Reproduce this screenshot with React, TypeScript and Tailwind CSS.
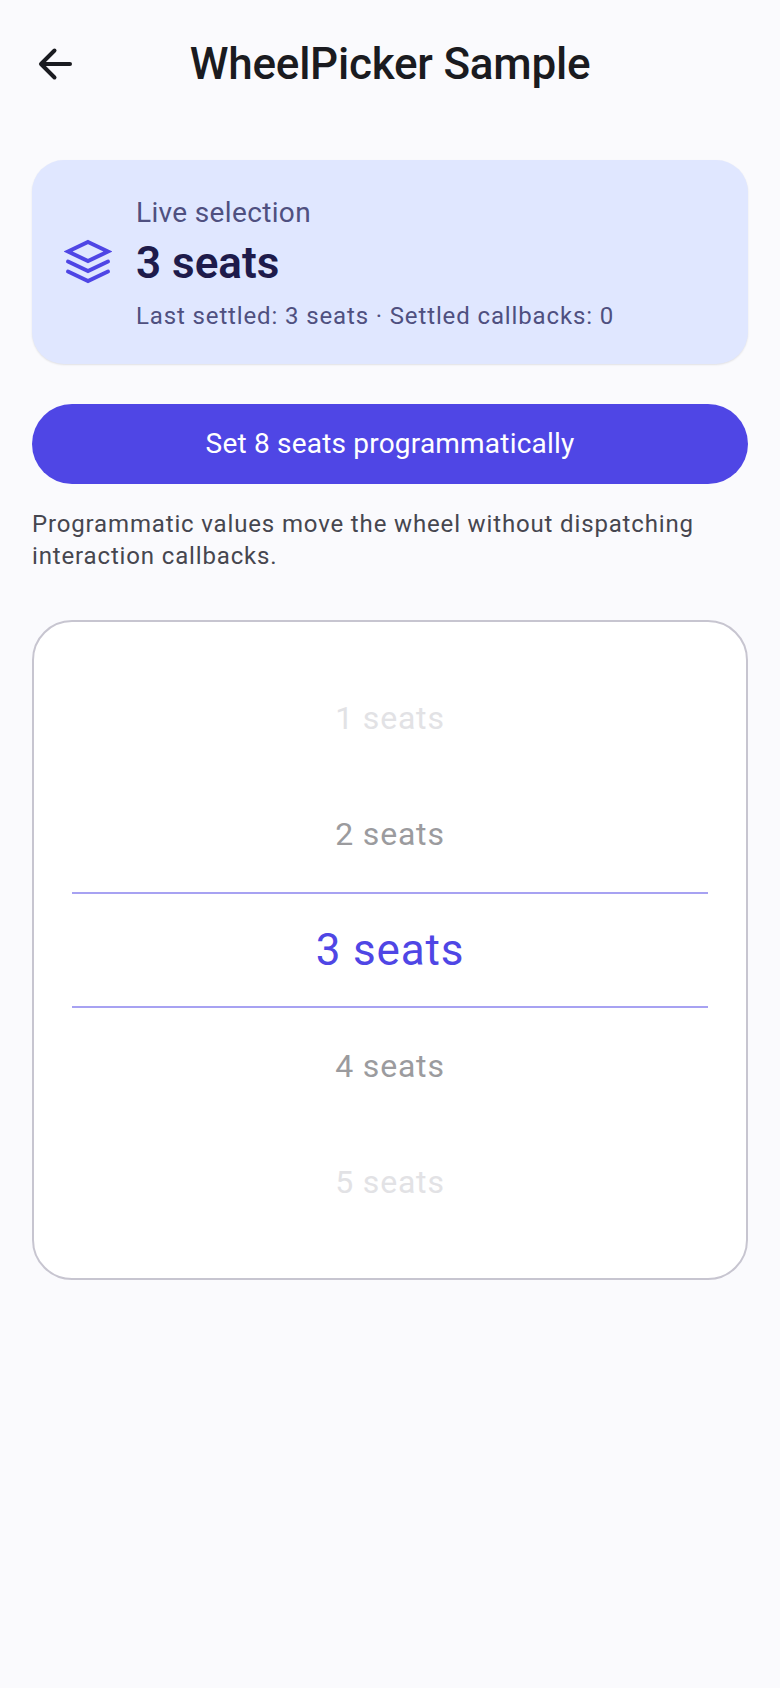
import React from 'react';

const seats = [
  { label: '1 seats', color: 'text-[#e2e2e5]' },
  { label: '2 seats', color: 'text-[#9b9b9e]' },
  { label: '3 seats', color: 'text-[#4f46e5]', selected: true },
  { label: '4 seats', color: 'text-[#9b9b9e]' },
  { label: '5 seats', color: 'text-[#e2e2e5]' },
];

const App: React.FC = () => {
  return (
    <div className="min-h-[1688px] w-[780px] bg-[#fafafd] px-8 font-['Roboto',sans-serif]">
      {/* Top bar */}
      <div className="relative -mx-8 flex h-[128px] items-center justify-center">
        <svg className="absolute left-[32px] top-[40px] h-[48px] w-[48px]" viewBox="0 0 48 48" fill="none" stroke="#1a1b20" strokeWidth="4" strokeLinecap="round" strokeLinejoin="round">
          <path d="M38 24H10" />
          <path d="M22.500 10.500 9 24 22.500 37.500" />
        </svg>
        <h1 className="text-[44px] font-medium leading-none tracking-[-0.22px] text-[#1a1b20]">WheelPicker Sample</h1>
      </div>

      {/* Live selection */}
      <div className="mt-8 flex h-[204px] items-center gap-[24px] rounded-[32px] bg-[#e0e7ff] px-[32px] shadow-[0_1px_2px_rgba(0,0,0,0.1)]">
        <svg className="h-[48px] w-[48px] shrink-0" viewBox="0 0 48 48" fill="none" stroke="#4f46e5" strokeWidth="4" strokeLinejoin="miter" strokeLinecap="round">
          <path d="M24 4 44 13.500 24 23 4 13.500Z" />
          <path d="M4 23.500 24 33 44 23.500" />
          <path d="M4 33.500 24 43 44 33.500" />
        </svg>
        <div className="flex flex-col pt-[3px]">
          <span className="text-[28px] leading-[36px] tracking-[0.35px] text-[#4f5080]">Live selection</span>
          <span className="mt-[4px] text-[44px] font-semibold leading-[56px] text-[#1e1b4b]">3 seats</span>
          <span className="mt-[9px] text-[24px] leading-[32px] tracking-[0.87px] text-[#4f5080]">Last settled: 3 seats · Settled callbacks: 0</span>
        </div>
      </div>

      <button className="mt-10 flex h-[80px] w-full items-center justify-center rounded-full bg-[#4f46e5] text-[28px] font-normal tracking-[0.2px] text-white">
        Set 8 seats programmatically
      </button>

      <p className="mt-[24px] text-[24px] leading-[32px] tracking-[0.85px] text-[#46464f]">
        Programmatic values move the wheel without dispatching interaction callbacks.
      </p>

      {/* Wheel */}
      <div className="relative mt-[48px] flex h-[660px] flex-col items-center justify-center rounded-[40px] border-2 border-[#c7c5d0] bg-white">
        <div className="absolute left-[38px] right-[38px] top-[270px] h-[116px] border-y-2 border-[#a7a2f2]" />
        {seats.map((s) => (
          <div
            key={s.label}
            className={`flex h-[116px] items-center ${s.color} ${s.selected ? 'text-[44px] tracking-[0.8px]' : 'text-[32px] tracking-[0.8px]'}`}
          >
            {s.label}
          </div>
        ))}
      </div>
    </div>
  );
};

export default App;
